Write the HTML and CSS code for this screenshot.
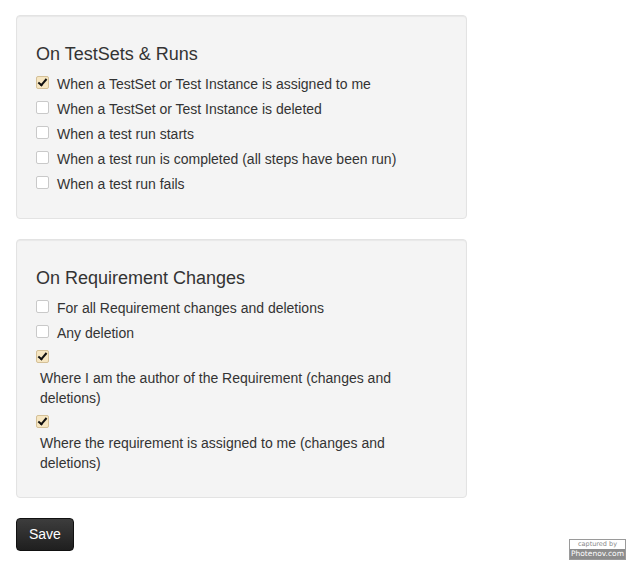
FILE: index.html
```html
<!DOCTYPE html>
<html>
<head>
<meta charset="utf-8">
<link rel="stylesheet" href="styles.css">
</head>
<body>
<div class="page">
  <div class="well">
    <h4 class="well-title">On TestSets &amp; Runs</h4>
    <label class="row"><input type="checkbox" class="cb" checked><span>When a TestSet or Test Instance is assigned to me</span></label>
    <label class="row"><input type="checkbox" class="cb"><span>When a TestSet or Test Instance is deleted</span></label>
    <label class="row"><input type="checkbox" class="cb"><span>When a test run starts</span></label>
    <label class="row"><input type="checkbox" class="cb"><span>When a test run is completed (all steps have been run)</span></label>
    <label class="row"><input type="checkbox" class="cb"><span>When a test run fails</span></label>
  </div>
  <div class="well">
    <h4 class="well-title">On Requirement Changes</h4>
    <label class="row"><input type="checkbox" class="cb"><span>For all Requirement changes and deletions</span></label>
    <label class="row"><input type="checkbox" class="cb"><span>Any deletion</span></label>
    <label class="stack"><span class="stack-box"><input type="checkbox" class="cb" checked></span><span class="stack-text">Where I am the author of the Requirement (changes and deletions)</span></label>
    <label class="stack"><span class="stack-box"><input type="checkbox" class="cb" checked></span><span class="stack-text">Where the requirement is assigned to me (changes and deletions)</span></label>
  </div>
  <button class="btn" type="button">Save</button>
</div>
<div class="badge"><div class="badge-top">captured by</div><div class="badge-bottom">Photenov.com</div></div>
</body>
</html>
```

FILE: styles.css
```css
html, body {
  margin: 0;
  padding: 0;
  background: #fff;
}
body {
  font-family: "Liberation Sans", Arial, sans-serif;
  font-size: 14px;
  line-height: 20px;
  color: #333;
  width: 634px;
  height: 568px;
  position: relative;
  overflow: hidden;
}
.page {
  padding: 15px 16px;
}
.well {
  width: 411px;
  padding: 19px;
  margin-bottom: 20px;
  background: #f4f4f4;
  border: 1px solid #e3e3e3;
  border-radius: 4px;
  box-shadow: inset 0 1px 1px rgba(0,0,0,0.05);
}
.well-title {
  font-size: 18px;
  font-weight: normal;
  line-height: 20px;
  margin: 9px 0 10px;
  color: #333;
}
.row {
  display: flex;
  align-items: flex-start;
  gap: 8px;
  margin-bottom: 5px;
}
.cb {
  -webkit-appearance: none;
  appearance: none;
  width: 13px;
  height: 13px;
  margin: 2px 0 0 0;
  border: 1px solid #c9c9c9;
  border-radius: 2px;
  background: #fff;
  box-sizing: border-box;
  flex: none;
  position: relative;
}
.cb:checked {
  background: #f6e6c2;
  border-color: #d4c097;
}
.cb:checked::after {
  content: "";
  position: absolute;
  left: 3px;
  top: 0px;
  width: 3px;
  height: 7px;
  border: solid #111;
  border-width: 0 2px 2px 0;
  transform: rotate(40deg);
}
.stack {
  display: block;
  margin-bottom: 5px;
}
.stack-box {
  display: flex;
  height: 20px;
  align-items: flex-start;
}
.stack-text {
  display: block;
  padding: 0 10px 0 4px;
}
.btn {
  font-family: "Liberation Sans", Arial, sans-serif;
  font-size: 14px;
  line-height: 19px;
  color: #fff;
  padding: 6px 12px;
  border: 1px solid #111;
  border-radius: 4px;
  background: linear-gradient(#3d3d3d, #1f1f1f);
  cursor: pointer;
}
.badge {
  position: absolute;
  left: 569px;
  top: 539px;
  width: 55px;
  border: 1px solid #9a9a9a;
  font-family: "DejaVu Sans", sans-serif;
  text-align: center;
}
.badge-top {
  background: #fff;
  color: #888;
  font-size: 6.5px;
  line-height: 9px;
}
.badge-bottom {
  background: #8c8c8c;
  color: #fff;
  font-size: 7.5px;
  line-height: 10px;
}
```
